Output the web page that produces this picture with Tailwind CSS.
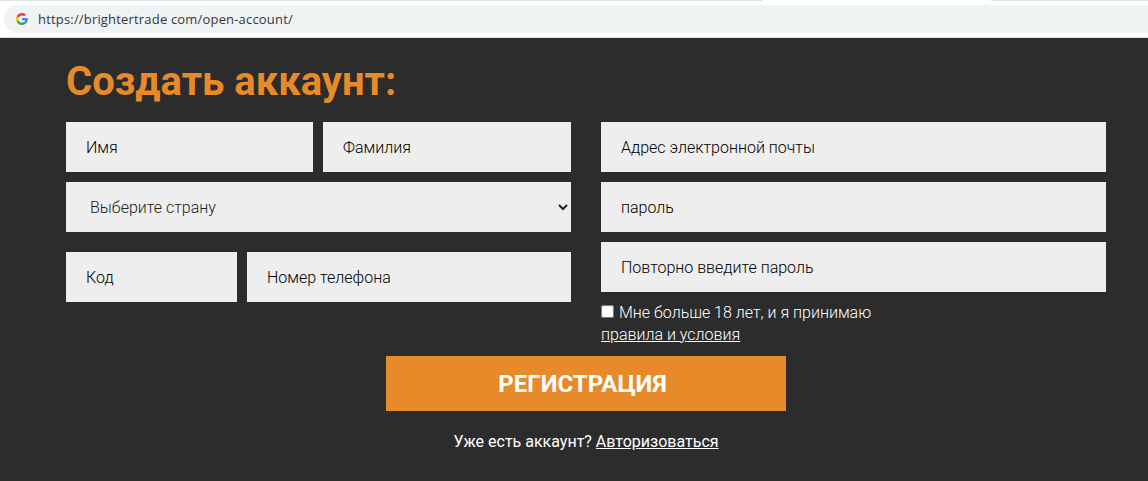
<!DOCTYPE html>
<html lang="ru">
  <head>
    <meta charset="UTF-8" />
    <meta name="viewport" content="width=device-width, initial-scale=1.0" />
    <title>Создать аккаунт</title>
    <script src="https://cdn.jsdelivr.net/npm/@tailwindcss/browser@4"></script>
  </head>
  <body class="bg-[#2c2c2c] font-['Roboto',sans-serif] text-white overflow-hidden">

    <!-- address bar -->
    <div class="h-[38px] bg-white border-b border-[#dcdfe2]">
      <div class="flex justify-between h-px">
        <div class="w-[762px] bg-[#dee1e6]"></div>
        <div class="w-[157px] bg-[#dee1e6]"></div>
      </div>
      <div class="mt-1 ml-1 h-7 pl-3 flex items-center rounded-l-full bg-[#f0f3f4]">
        <svg class="w-3 h-3 shrink-0" viewBox="0 0 48 48">
          <path fill="#ea4335" d="M24 9.5c3.54 0 6.71 1.22 9.21 3.6l6.85-6.85C35.9 2.38 30.47 0 24 0 14.62 0 6.51 5.38 2.56 13.22l7.98 6.19C12.43 13.72 17.74 9.5 24 9.5z" />
          <path fill="#4285f4" d="M46.98 24.55c0-1.57-.15-3.09-.38-4.55H24v9.02h12.94c-.58 2.96-2.26 5.48-4.78 7.18l7.73 6c4.51-4.18 7.09-10.36 7.09-17.65z" />
          <path fill="#fbbc05" d="M10.53 28.59c-.48-1.45-.76-2.99-.76-4.59s.27-3.14.76-4.59l-7.98-6.19C.92 16.46 0 20.12 0 24c0 3.88.92 7.54 2.56 10.78l7.97-6.19z" />
          <path fill="#34a853" d="M24 48c6.48 0 11.93-2.13 15.89-5.81l-7.73-6c-2.15 1.45-4.92 2.3-8.16 2.3-6.26 0-11.57-4.22-13.47-9.91l-7.98 6.19C6.51 42.62 14.62 48 24 48z" />
        </svg>
        <span class="ml-2.5 pt-px font-['Open_Sans',sans-serif] text-[13px] tracking-[0.18px] text-[#33363a] whitespace-nowrap">https://brightertrade com/open-account/</span>
      </div>
    </div>

    <form id="form" class="pl-[66px] pr-[42px] pt-5">
      <h1 class="h-16 text-[40px] leading-[48px] font-bold text-[#e78a29]">Создать аккаунт:</h1>

      <div class="grid grid-cols-2 gap-x-[30px]">
        <div>
          <div class="flex gap-2.5">
            <input class="w-[247px] h-[50px] px-5 bg-[#eee] font-light text-black placeholder-black" placeholder="Имя" />
            <input class="flex-1 min-w-0 h-[50px] px-5 bg-[#eee] font-light text-black placeholder-black" placeholder="Фамилия" />
          </div>
          <select class="block mt-2.5 w-full h-[50px] pl-5 bg-[#eee] font-light text-[#222]">
            <option>Выберите страну</option>
          </select>
          <div class="flex gap-2.5 mt-5">
            <input class="w-[171px] h-[50px] px-5 bg-[#eee] font-light text-black placeholder-black" placeholder="Код" />
            <input class="flex-1 min-w-0 h-[50px] px-5 bg-[#eee] font-light text-black placeholder-black" placeholder="Номер телефона" />
          </div>
        </div>

        <div>
          <div class="flex flex-col gap-2.5">
            <input type="email" class="h-[50px] px-5 bg-[#eee] font-light text-black placeholder-black" placeholder="Адрес электронной почты" />
            <input type="password" class="h-[50px] px-5 bg-[#eee] font-light text-black placeholder-black" placeholder="пароль" />
            <input type="password" class="h-[50px] px-5 bg-[#eee] font-light text-black placeholder-black" placeholder="Повторно введите пароль" />
          </div>
          <div class="mt-2.5 leading-[22px] font-light">
            <label class="flex items-center">
              <input type="checkbox" class="w-[13px] h-[13px] mr-[5px] mb-[3px]" />
              Мне больше 18 лет, и я принимаю
            </label>
            <a href="#" class="block w-fit underline">правила и условия</a>
          </div>
        </div>
      </div>

      <button type="submit" class="block mx-auto mt-2.5 w-[400px] h-[55px] pr-[7px] bg-[#e78a29] text-2xl font-bold">РЕГИСТРАЦИЯ</button>
      <p class="mt-5 text-center leading-[22px]">Уже есть аккаунт? <a href="#" class="underline">Авторизоваться</a></p>
    </form>

  </body>
</html>
